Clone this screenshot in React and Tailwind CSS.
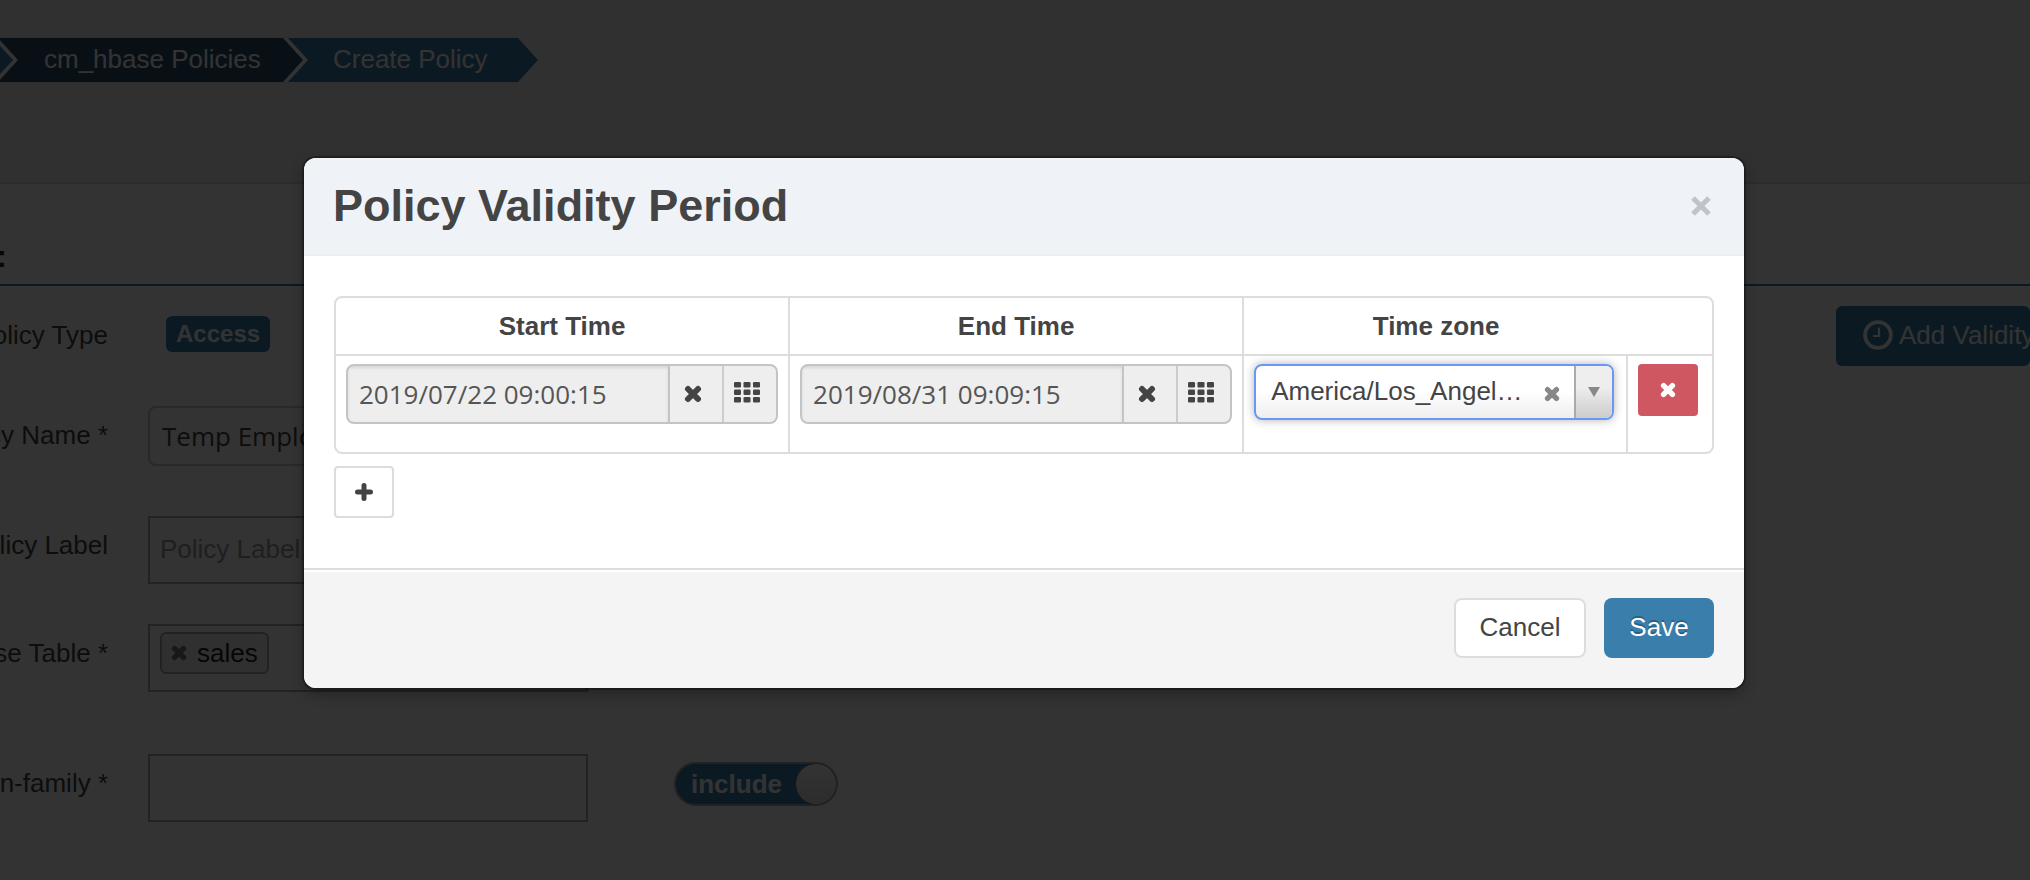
import { useState } from "react";

// Small glyphs shared by the buttons
function Cross({ className }) {
  return (
    <svg viewBox="0 0 18 18" className={className} stroke="currentColor" strokeWidth="6" strokeLinecap="round" aria-hidden="true">
      <path d="M4 4 14 14M14 4 4 14" />
    </svg>
  );
}

function Grid() {
  return (
    <svg viewBox="0 0 26 21" className="h-[21px] w-[26px]" fill="currentColor" aria-hidden="true">
      {[0, 7.5, 15].map((y) =>
        [0, 9.5, 19].map((x) => <rect key={`${x}-${y}`} x={x} y={y} width="7" height="5.5" rx="1.2" />)
      )}
    </svg>
  );
}

function Clock() {
  return (
    <svg viewBox="0 0 30 30" className="h-[30px] w-[30px]" fill="none" stroke="currentColor" aria-hidden="true">
      <circle cx="15" cy="15" r="12.9" strokeWidth="3.8" />
      <path d="M16 7.5V16H10" strokeWidth="2.2" />
    </svg>
  );
}

function Breadcrumbs() {
  return (
    <nav aria-label="Breadcrumb" className="relative h-11 w-[538px] text-white">
      <svg viewBox="0 0 538 44" className="absolute inset-0 h-full w-full" aria-hidden="true">
        <path d="M-2 0 18 22-2 44V0Z" fill="#fff" />
        <path d="M-7 0 13 22-7 44V0Z" fill="#3a7fab" />
        <path d="M-2 0H288L308 22 288 44H-2L18 22Z" fill="#fff" />
        <path d="M-2 0H283L303 22 283 44H-2L18 22Z" fill="#2a5070" />
        <path d="M288 0H518L538 22 518 44H288L308 22Z" fill="#3a7fab" />
      </svg>
      <ol className="relative flex h-full items-center pb-px text-[26px]">
        <li className="w-[289px] pl-11"><a href="#policies">cm_hbase Policies</a></li>
        <li className="pl-11"><a href="#create" aria-current="page">Create Policy</a></li>
      </ol>
    </nav>
  );
}

function Row({ label, htmlFor, className, children }) {
  return (
    <div className={`flex ${className}`}>
      <label htmlFor={htmlFor} className="flex w-[108px] shrink-0 justify-end overflow-hidden pt-[11px] leading-9 whitespace-nowrap">{label}</label>
      <div className="flex flex-1 pl-10">{children}</div>
    </div>
  );
}

function PolicyForm() {
  return (
    <div className="min-h-screen overflow-hidden bg-[#f1f1f1] text-[26px] text-[#444]">
      <header className="h-[184px] border-b-2 border-[#d9d9d9] pt-[38px]"><Breadcrumbs /></header>
      <main className="min-h-[696px] bg-white">
        <div className="h-[102px] border-b-2 border-[#3a7fab] pt-[54px]">
          <h2 className="flex w-[7px] justify-end overflow-hidden text-[32px] leading-9 font-bold whitespace-nowrap text-[#222]">Policy Details :</h2>
        </div>
        <Row label="Policy Type" htmlFor="type" className="h-[120px] pt-5">
          <div className="flex w-full justify-between">
            <output id="type" className="mt-[10px] ml-[18px] h-9 rounded-md bg-[#3a7fab] px-[10px] text-[24px] leading-9 font-bold text-white">Access</output>
            <button className="flex h-[60px] w-[194px] shrink-0 items-center gap-[6px] overflow-hidden rounded-md bg-[#3a7fab] pb-[2px] pl-[27px] whitespace-nowrap text-white">
              <span className="shrink-0"><Clock /></span>Add Validity period
            </button>
          </div>
        </Row>
        <Row label="Policy Name *" htmlFor="name" className="h-[110px]">
          <input id="name" defaultValue="Temp Employees" className="h-[60px] w-[440px] rounded-lg border-2 border-[#ccc] px-3 font-['Open_Sans',sans-serif]" />
        </Row>
        <Row label="Policy Label" htmlFor="label" className="h-[108px]">
          <input id="label" placeholder="Policy Label" className="h-[68px] w-[440px] border-2 border-[#aaa] px-[10px] pb-[2px] placeholder:text-[#999]" />
        </Row>
        <Row label="HBase Table *" htmlFor="table" className="h-[130px]">
          <div className="flex h-[68px] w-[440px] border-2 border-[#aaa] p-[6px] pl-[10px]">
            <span className="flex h-[42px] items-center gap-[10px] rounded-md border-2 border-[#aaa] bg-[#f0f0f0] px-[9px] text-[#222]">
              <button aria-label="Remove sales" className="text-[#777]"><Cross className="h-[16px] w-[16px]" /></button>
              sales
            </span>
            <input id="table" className="min-w-0 flex-1" />
          </div>
        </Row>
        <Row label="HBase Column-family *" htmlFor="family" className="h-[100px]">
          <input id="family" className="h-[68px] w-[440px] border-2 border-[#aaa] px-[10px]" />
          <button role="switch" aria-checked="true" className="mt-2 ml-[86px] flex h-11 w-[164px] items-center justify-between rounded-full border-2 border-[#aaa] bg-[#3a7fab] pl-[15px] font-bold text-white">
            include
            <span className="h-10 w-10 rounded-full bg-gradient-to-b from-[#fff] to-[#ddd]" />
          </button>
        </Row>
      </main>
    </div>
  );
}

function DateField({ label, value, onChange }) {
  return (
    <div className="flex h-[60px] overflow-hidden rounded-lg border-2 border-[#c4c4c4] bg-[#eee] text-[#444]">
      <input aria-label={label} value={value} onChange={(e) => onChange(e.target.value)} className="min-w-0 flex-1 px-[11px] font-['Open_Sans',sans-serif] text-[#555] shadow-[inset_0_2px_3px_rgba(0,0,0,0.1)] outline-none" />
      <button aria-label={`Clear ${label}`} onClick={() => onChange("")} className="flex w-[54px] items-center justify-center border-l-2 border-[#c4c4c4] pr-[6px]"><Cross className="h-[18px] w-[18px]" /></button>
      <button aria-label={`Pick ${label}`} className="flex w-[54px] items-center justify-center border-l-2 border-[#ccc] pr-[6px] pb-1"><Grid /></button>
    </div>
  );
}

function ZoneSelect() {
  return (
    <div className="relative flex h-14 items-center overflow-hidden rounded-lg border-2 border-[#6897f5] bg-gradient-to-b from-white from-50% to-[#eee]">
      <select aria-label="Time zone" className="h-full w-full appearance-none truncate pr-[76px] pb-[2px] pl-[15px] outline-none">
        <option value="America/Los_Angeles">America/Los_Angel…</option>
      </select>
      <button aria-label="Clear time zone" className="absolute top-5 right-[52px] text-[#888]"><Cross className="h-[16px] w-[16px]" /></button>
      <span className="pointer-events-none absolute inset-y-0 right-0 flex w-[38px] justify-center border-l-2 border-[#aaa] bg-gradient-to-b from-[#eee] from-40% to-[#ccc] pt-[21px]">
        <svg viewBox="0 0 12 10" className="h-[10px] w-[12px]" aria-hidden="true"><path d="M0 0H12L6 10Z" fill="#888" /></svg>
      </span>
    </div>
  );
}

function ValidityDialog() {
  const [start, setStart] = useState("2019/07/22 09:00:15");
  const [end, setEnd] = useState("2019/08/31 09:09:15");

  return (
    <div role="dialog" aria-modal="true" aria-labelledby="dialog-title" className="w-full max-w-[1440px] overflow-hidden rounded-xl bg-white text-[26px] text-[#444] shadow-[0_0_0_2px_rgba(0,0,0,0.3),0_6px_14px_rgba(0,0,0,0.3)]">
      <header className="flex h-[98px] items-center justify-between border-b-2 border-[#eee] bg-[#eff3f8] pr-[33px] pl-[29px]">
        <h1 id="dialog-title" className="text-[45px] font-bold">Policy Validity Period</h1>
        <button aria-label="Close" className="text-[#c0c3c7]">
          <svg viewBox="0 0 20 20" className="h-5 w-5" stroke="currentColor" strokeWidth="5" aria-hidden="true"><path d="M2 2 18 18M18 2 2 18" /></svg>
        </button>
      </header>

      <div className="px-[30px] pt-10 pb-[50px]">
        <div className="overflow-hidden rounded-lg border-2 border-[#ddd]">
          <table className="w-full table-fixed border-separate border-spacing-0">
            <colgroup>
              <col className="w-[33%]" /><col className="w-[33%]" /><col /><col className="w-[84px]" />
            </colgroup>
            <thead>
              <tr className="h-[58px]">
                <th className="border-r-2 border-b-2 border-[#ddd]">Start Time</th>
                <th className="border-r-2 border-b-2 border-[#ddd]">End Time</th>
                <th className="border-b-2 border-[#ddd]">Time zone</th>
                <td className="border-b-2 border-[#ddd]" />
              </tr>
            </thead>
            <tbody>
              <tr className="h-24 align-top">
                <td className="border-r-2 border-[#ddd] px-[10px] pt-2"><DateField label="Start time" value={start} onChange={setStart} /></td>
                <td className="border-r-2 border-[#ddd] px-[10px] pt-2"><DateField label="End time" value={end} onChange={setEnd} /></td>
                <td className="border-r-2 border-[#ddd] pt-2 pr-3 pl-[10px]"><div className="rounded-lg shadow-[0_0_10px_rgba(0,0,0,0.3)]"><ZoneSelect /></div></td>
                <td className="px-[10px] pt-2">
                  <button aria-label="Remove period" className="flex h-[52px] w-[60px] items-center justify-center rounded bg-[#cf5761] text-white"><Cross className="h-[16px] w-[16px]" /></button>
                </td>
              </tr>
            </tbody>
          </table>
        </div>
        <button aria-label="Add period" className="mt-3 flex h-[52px] w-[60px] items-center justify-center rounded border-2 border-[#ddd]">
          <svg viewBox="0 0 18 18" className="h-[18px] w-[18px]" stroke="currentColor" strokeWidth="5" strokeLinecap="round" aria-hidden="true"><path d="M9 2.5V15.5M2.5 9H15.5" /></svg>
        </button>
      </div>

      <footer className="flex justify-end gap-[18px] border-t-2 border-[#ddd] bg-[#f4f4f4] px-[30px] pt-7 pb-[30px] shadow-[inset_0_2px_0_#fff]">
        <button className="h-[60px] w-[132px] rounded-lg border-2 border-[#ddd] bg-white pb-[2px]">Cancel</button>
        <button className="h-[60px] w-[110px] rounded-lg bg-[#3a7fab] pb-[2px] text-white [text-shadow:0_-2px_0_rgba(0,0,0,0.25)]">Save</button>
      </footer>
    </div>
  );
}

export default function App() {
  return (
    <div className="relative overflow-hidden font-['Liberation_Sans',Arial,sans-serif]">
      <PolicyForm />
      <div className="absolute inset-0 flex items-start justify-center bg-black/80 pt-[158px] pl-[18px]">
        <ValidityDialog />
      </div>
    </div>
  );
}
